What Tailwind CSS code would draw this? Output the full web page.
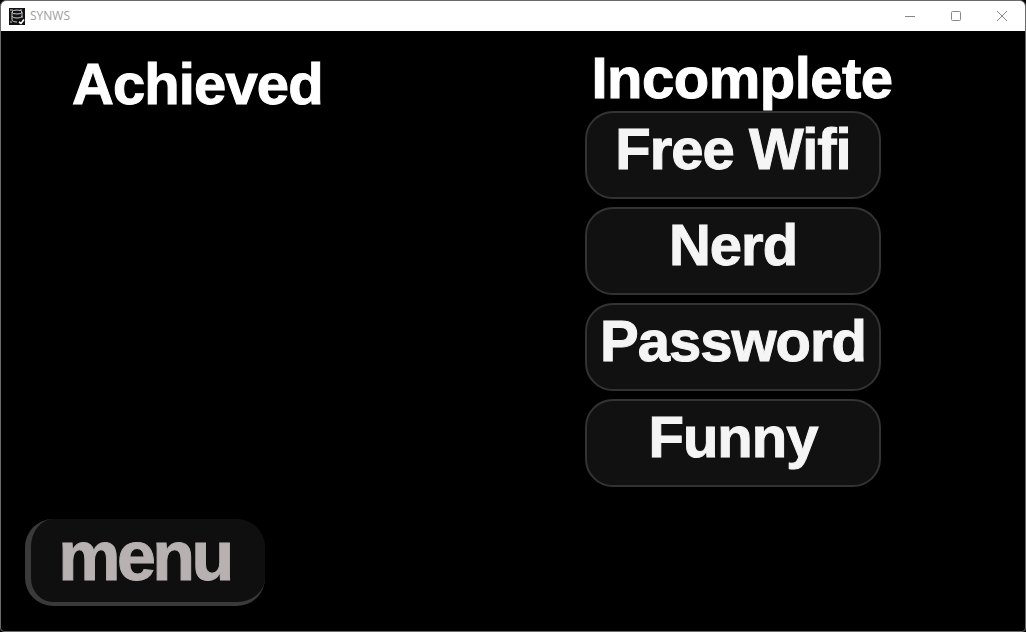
<!DOCTYPE html>
<html lang="en">
<head>
    <meta charset="UTF-8">
    <title>SYNWS</title>
    <script src="https://cdn.jsdelivr.net/npm/@tailwindcss/browser@4"></script>
</head>
<body class="bg-black overflow-hidden">
    <div class="w-[1026px] h-[632px] flex flex-col border border-[#6b6b6b] rounded-t-[6px] rounded-b-[4px] overflow-hidden bg-black font-['Liberation_Sans',Arial,sans-serif]">
        <!-- Title bar -->
        <div class="h-[30px] flex-none bg-white flex items-center">
            <svg class="ml-[8px] w-[16px] h-[17px]" viewBox="0 0 16 17">
                <rect width="16" height="17" fill="#111"/>
                <ellipse cx="8" cy="4" rx="5" ry="2" stroke="#ccc" fill="none"/>
                <path d="M3 4v8c0 1 2 2 5 2M13 4v6M3 8c0 1 2 2 5 2s5-1 5-2M1 2h3M12 1v2M1 14h2" stroke="#ccc" fill="none"/>
                <path d="M10 14l2 1.500 3-4" stroke="#fff" stroke-width="1.600" fill="none"/>
            </svg>
            <span class="ml-[5px] text-[12px] text-[#a0a0a0] font-['Open_Sans',sans-serif]">SYNWS</span>
            <div class="ml-auto flex items-center">
                <div class="w-[46px] h-[30px] flex items-center justify-center">
                    <svg class="w-[10px] h-[10px]" viewBox="0 0 10 10"><path d="M0 5.500h10" stroke="#888" fill="none"/></svg>
                </div>
                <div class="w-[46px] h-[30px] flex items-center justify-center">
                    <svg class="w-[10px] h-[10px]" viewBox="0 0 10 10"><rect x=".5" y=".5" width="9" height="9" rx="1" stroke="#888" fill="none"/></svg>
                </div>
                <div class="w-[46px] h-[30px] flex items-center justify-center">
                    <svg class="w-[10px] h-[10px]" viewBox="0 0 10 10"><path d="M0 0l10 10M10 0L0 10" stroke="#888" fill="none"/></svg>
                </div>
            </div>
        </div>

        <!-- Main -->
        <div class="flex-1 flex text-white font-bold">
            <div class="w-[584px] flex flex-col justify-between pl-[24px] pb-[25px]">
                <h2 class="ml-[47px] mt-[21px] text-[58px] leading-[64px] tracking-[-0.9px] [-webkit-text-stroke:1px_#fff]">Achieved</h2>
                <button class="w-[240px] h-[87px] rounded-[28px] bg-[#0f0f0f] border-l-[6px] border-b-[4px] border-[#3a3a3a] text-[#b8b1b1] text-[70px] leading-none tracking-[-3.5px] pb-[9px] pr-[7px] [-webkit-text-stroke:1px_#b8b1b1]">menu</button>
            </div>
            <div class="w-[296px] flex flex-col">
                <h2 class="mt-[14px] w-[314px] text-center text-[58px] leading-[66px] tracking-[-0.5px] [-webkit-text-stroke:1px_#fff]">Incomplete</h2>
                <div class="flex flex-col gap-[8px]">
                    <button class="h-[88px] rounded-[28px] bg-[#111] border-2 border-[#333] text-[#f5f5f5] text-[58px] leading-none tracking-[-1px] pb-[12px] [-webkit-text-stroke:1px_#f5f5f5]">Free Wifi</button>
                    <button class="h-[88px] rounded-[28px] bg-[#111] border-2 border-[#333] text-[#f5f5f5] text-[58px] leading-none tracking-[-1px] pb-[12px] [-webkit-text-stroke:1px_#f5f5f5]">Nerd</button>
                    <button class="h-[88px] rounded-[28px] bg-[#111] border-2 border-[#333] text-[#f5f5f5] text-[58px] leading-none tracking-[-1px] pb-[12px] [-webkit-text-stroke:1px_#f5f5f5]">Password</button>
                    <button class="h-[88px] rounded-[28px] bg-[#111] border-2 border-[#333] text-[#f5f5f5] text-[58px] leading-none tracking-[-1px] pb-[12px] [-webkit-text-stroke:1px_#f5f5f5]">Funny</button>
                </div>
            </div>
        </div>
    </div>
</body>
</html>
